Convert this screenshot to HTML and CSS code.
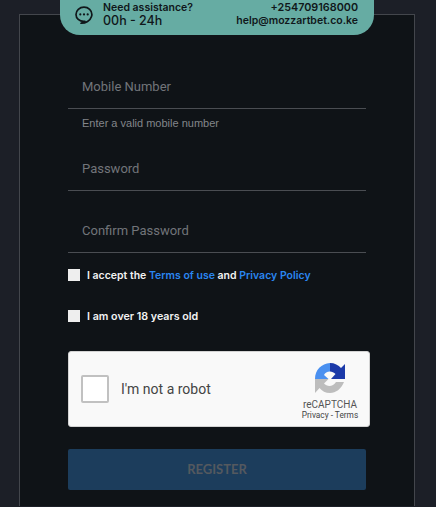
FILE: index.html
```html
<!DOCTYPE html>
<html lang="en">
<head>
<meta charset="utf-8">
<title>Register</title>
<link rel="stylesheet" href="styles.css">
</head>
<body>
<div class="assist">
  <svg class="assist-icon" width="20" height="20" viewBox="0 0 20 20" fill="none">
    <path d="M10 2.200c-4.500 0-8 3.100-8 7.200 0 4 3.400 7 7.700 7 .5 0 .8 0 1.200-.1 0 0-1.500 1.100-3.900 1.900 4.800.2 9.200-2.700 10.400-6.500.3-.8.500-1.500.500-2.300 0-4.100-3.400-7.200-7.900-7.200z" stroke="#10171a" stroke-width="1.700" stroke-linejoin="round"/>
    <circle cx="6.300" cy="9.400" r="1.100" fill="#10171a"/>
    <circle cx="10" cy="9.400" r="1.100" fill="#10171a"/>
    <circle cx="13.700" cy="9.400" r="1.100" fill="#10171a"/>
  </svg>
  <div class="assist-left">
    <div class="assist-small">Need assistance?</div>
    <div class="assist-big">00h - 24h</div>
  </div>
  <div class="assist-right">
    <div class="assist-small assist-phone">+254709168000</div>
    <div class="assist-mail">help@mozzartbet.co.ke</div>
  </div>
</div>
<main class="panel">
  <form class="form">
    <div class="field first"><span class="placeholder">Mobile Number</span></div>
    <div class="help">Enter a valid mobile number</div>
    <div class="field second"><span class="placeholder">Password</span></div>
    <div class="field third"><span class="placeholder">Confirm Password</span></div>
    <label class="check terms"><span class="box"></span><span>I accept the <a class="link">Terms of use</a> and <a class="link">Privacy Policy</a></span></label>
    <label class="check age"><span class="box"></span><span class="age-text">I am over 18 years old</span></label>
    <div class="captcha">
      <span class="captcha-box"></span>
      <span class="captcha-text">I'm not a robot</span>
      <div class="captcha-brand">
        <svg width="32" height="32" viewBox="0 0 32 32">
          <path d="M1 17 C1 8 7.500 1.500 16 1 L16 9.500 C13 9.500 11 11 10 13 L14.500 17 Z" fill="#4a90f0"/>
          <path d="M16 1 C20.500 1 24.500 3 27 6 L31 2 L31 17 L17 17 L21.500 12 C20 10.500 18 9.500 16 9.500 Z" fill="#1c3aa9"/>
          <path d="M1 17 L14.500 17 L10 21.500 C13 25 19 25 22 20 L30 20 C27 27 22 31 16 31 C11.500 31 8 29 5.500 26 L1 31 Z" fill="#bdbdbd"/>
        </svg>
        <div class="brand-name">reCAPTCHA</div>
        <div class="brand-links">Privacy - Terms</div>
      </div>
    </div>
    <button class="submit" type="button">REGISTER</button>
  </form>
</main>
</body>
</html>
```
FILE: styles.css
```css
html, body {
  margin: 0;
  padding: 0;
  height: 507px;
  overflow: hidden;
  background: #1c1f27;
}

body {
  position: relative;
  font-family: "Liberation Sans", Arial, sans-serif;
}

.assist {
  position: absolute;
  top: 0;
  left: 60px;
  width: 314px;
  height: 35px;
  box-sizing: border-box;
  padding: 0 16px 6px 14px;
  display: flex;
  align-items: center;
  background: #66aca3;
  border-radius: 0 0 20px 20px;
  color: #10171a;
  font-family: Inter, sans-serif;
  z-index: 2;
}

.assist-icon {
  flex: none;
  margin-right: 9px;
  margin-top: 1px;
}

.assist-left {
  flex: 1;
}

.assist-right {
  text-align: right;
}

.assist-small {
  font-size: 10.500px;
  font-weight: 600;
  line-height: 12px;
}

.assist-phone {
  font-size: 10.800px;
}

.assist-big {
  font-size: 12.500px;
  font-weight: 500;
  line-height: 13px;
}

.assist-mail {
  font-size: 10.500px;
  font-weight: 600;
  line-height: 14px;
}

.panel {
  margin: 14px 0 0 19px;
  width: 396px;
  height: 492px;
  box-sizing: border-box;
  background: #0f1317;
  border: 1px solid #43464c;
  border-bottom: 0;
  padding: 0 48px;
}

.form {
  display: flex;
  flex-direction: column;
  width: 298px;
}

.field {
  box-sizing: border-box;
  height: 41px;
  border-bottom: 1px solid #4a4d52;
  padding-left: 14px;
  display: flex;
  align-items: center;
}

.field.first {
  margin-top: 53px;
}

.field.second {
  margin-top: 20px;
}

.field.third {
  margin-top: 21px;
}

.placeholder {
  color: #72757a;
  font-family: Roboto, sans-serif;
  font-size: 13px;
  margin-top: -3px;
}

.help {
  color: #83868a;
  font-size: 11px;
  line-height: 13px;
  margin: 8px 0 0 14px;
}

.check {
  display: flex;
  align-items: center;
  gap: 7px;
  color: #f2f2f2;
  font-family: Inter, sans-serif;
  font-size: 10.500px;
  font-weight: 600;
  line-height: 13px;
}

.age-text {
  font-size: 10.700px;
}

.terms {
  margin-top: 16px;
}

.age {
  margin-top: 28px;
}

.box {
  flex: none;
  width: 12px;
  height: 12px;
  margin-top: -2px;
  background: #eeeeee;
}

.link {
  color: #2a86f0;
}

.captcha {
  margin-top: 28px;
  width: 302px;
  height: 76px;
  box-sizing: border-box;
  background: #f9f9f9;
  border: 1px solid #d3d3d3;
  border-radius: 3px;
  display: flex;
  align-items: center;
  padding-left: 12px;
  font-family: Roboto, sans-serif;
}

.captcha-box {
  flex: none;
  width: 28px;
  height: 28px;
  box-sizing: border-box;
  background: #ffffff;
  border: 2px solid #c1c1c1;
  border-radius: 2px;
}

.captcha-text {
  margin-left: 12px;
  flex: 1;
  color: #444444;
  font-size: 14px;
}

.captcha-brand {
  flex: none;
  align-self: flex-start;
  width: 70px;
  margin-right: 4px;
  padding-top: 10px;
  text-align: center;
  color: #555555;
}

.captcha-brand svg {
  display: block;
  margin: 0 auto 4px;
}

.brand-name {
  font-size: 10px;
  line-height: 13px;
}

.brand-links {
  font-size: 8.300px;
  line-height: 9px;
  color: #444444;
}

.submit {
  margin-top: 22px;
  height: 41px;
  width: 298px;
  border: 0;
  border-radius: 2px;
  background: #1c3d5c;
  color: #54595f;
  font-family: Lato, sans-serif;
  font-size: 13px;
  font-weight: 700;
  padding: 0 0 2px;
}
```
